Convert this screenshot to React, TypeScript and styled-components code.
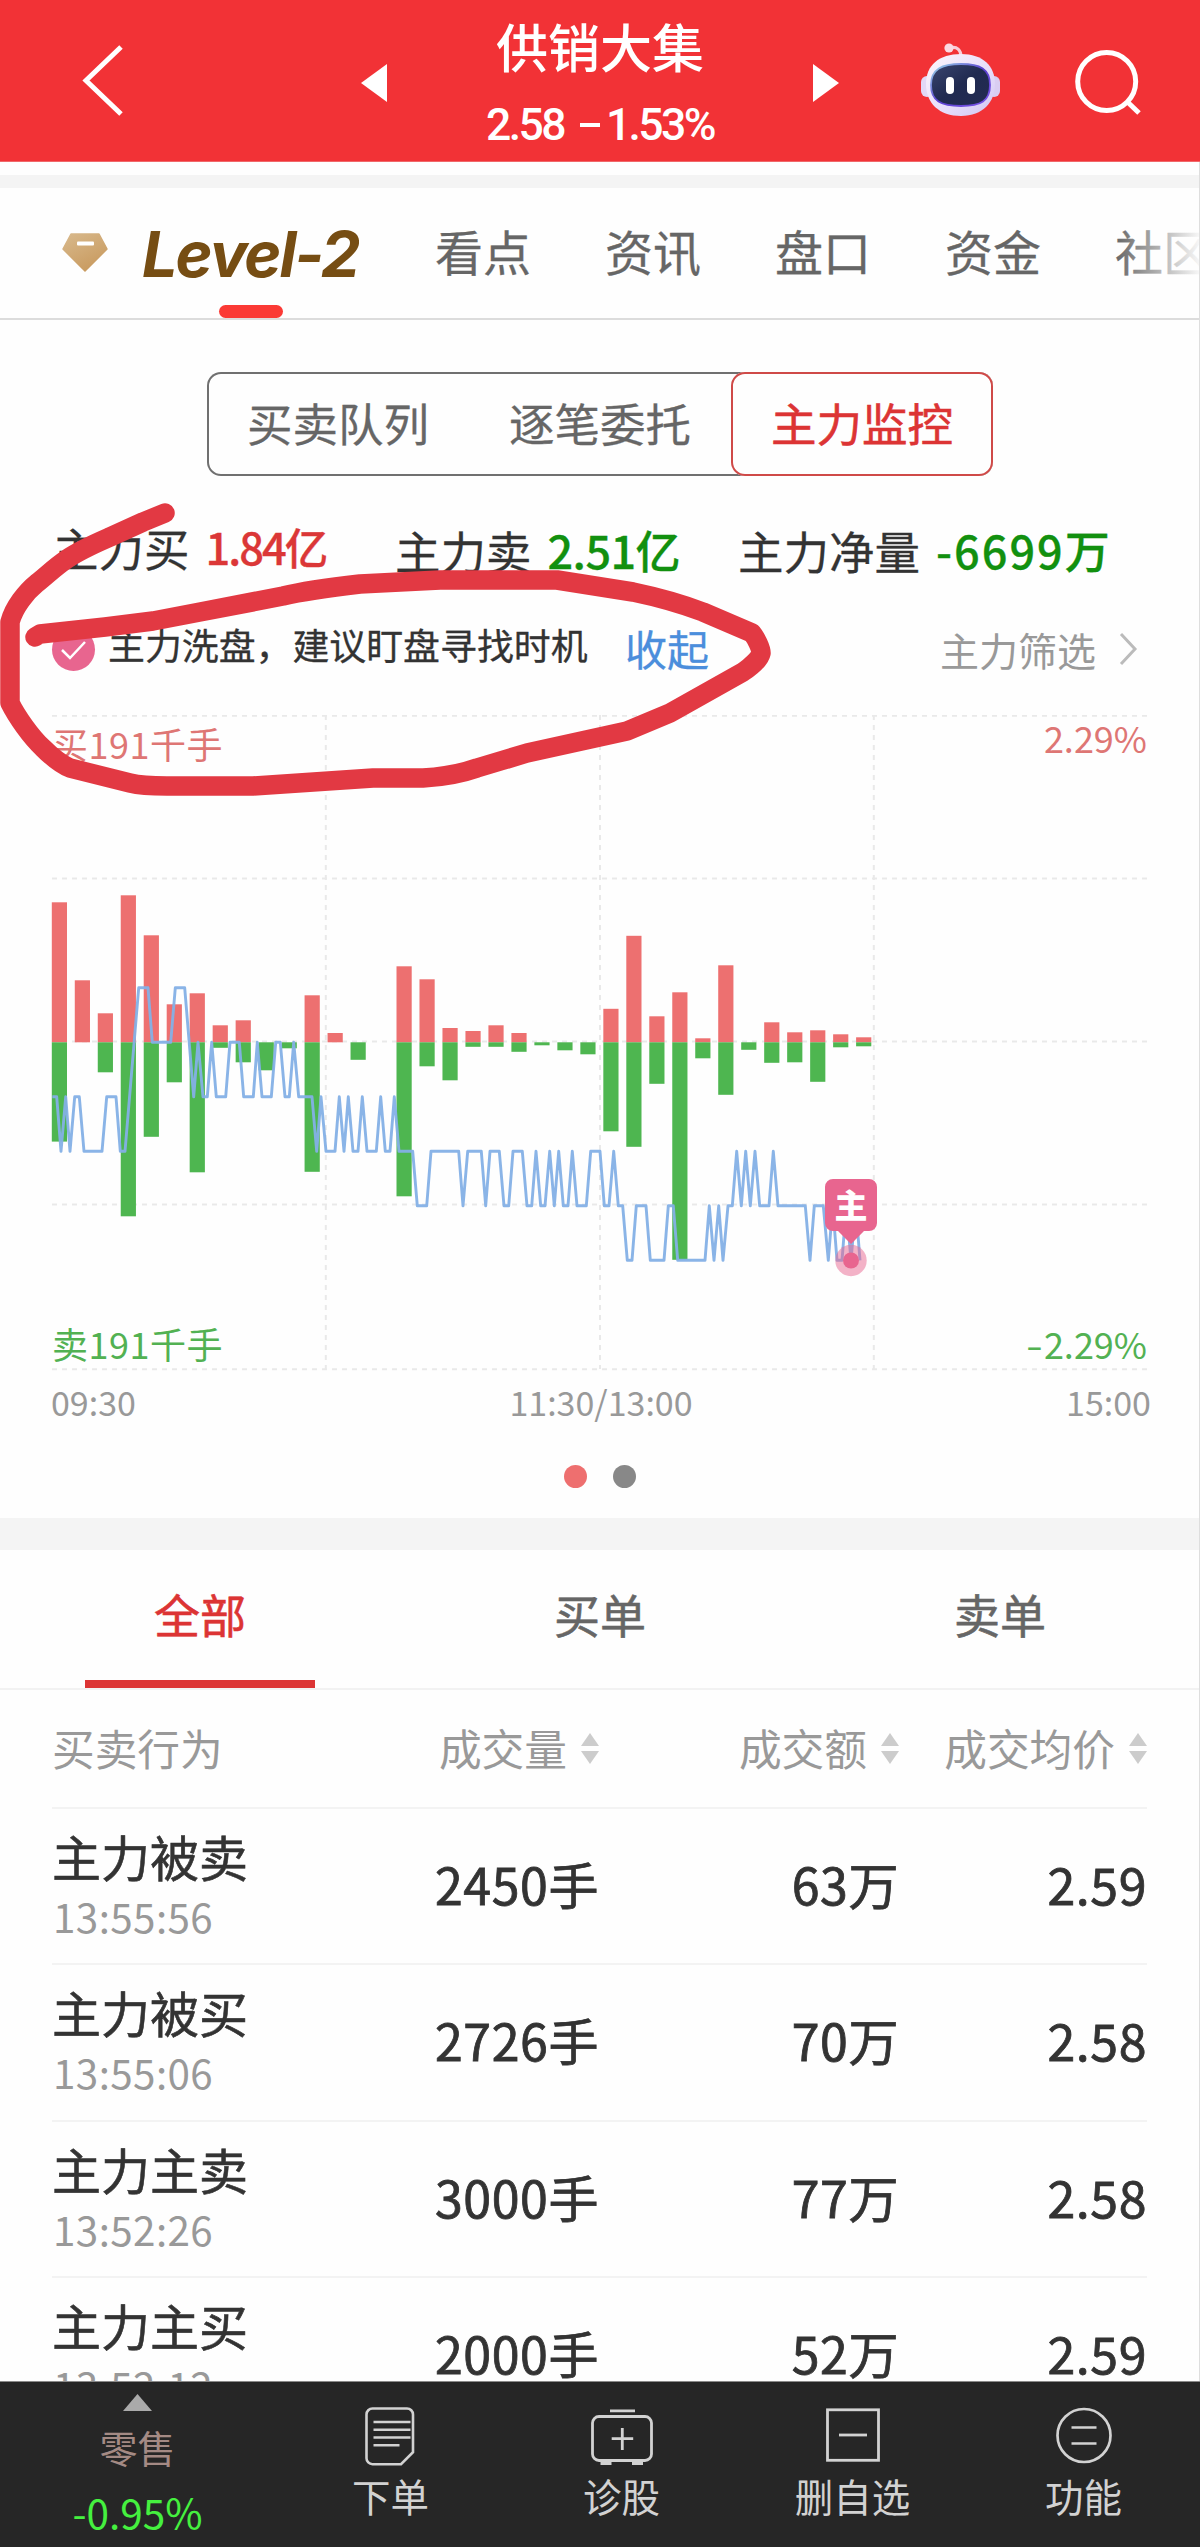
import React from 'react';
import styled, { createGlobalStyle } from 'styled-components';

const GlobalStyle = createGlobalStyle`
  *, *::before, *::after { box-sizing: border-box; }
  body {
    margin: 0;
    background: #fefefe;
    font-family: 'Noto Sans CJK SC', 'Noto Sans', sans-serif;
  }
  svg { display: block; flex: none; }
`;

const Page = styled.div`
  position: relative;
  width: 1200px;
  height: 2547px;
  overflow: hidden;
  display: flex;
  flex-direction: column;
  white-space: nowrap;
`;

/* ---------- top bar ---------- */

const TopBar = styled.header`
  flex: none;
  height: 162px;
  display: grid;
  grid-template-columns: 361px 478px 361px;
  background: #f23236;
  border-bottom: 1px solid #f0686a;
  color: #fff;
`;

const TopSide = styled.div`
  display: flex;
  align-items: flex-start;
`;

const BackSlot = styled(TopSide)`
  padding: 42px 0 0 80px;
`;

const ActionSlot = styled(TopSide)`
  padding: 40px 0 0 81px;
  gap: 68px;
`;

const StockSwitch = styled.div`
  display: flex;
  justify-content: space-between;
`;

const Arrow = styled.span<{ $to: 'left' | 'right' }>`
  width: 26px;
  height: 38px;
  margin-top: 64px;
  background: #fff;
  clip-path: ${p => (p.$to === 'left' ? 'polygon(0 50%, 100% 0, 100% 100%)' : 'polygon(100% 50%, 0 0, 0 100%)')};
`;

const StockTitle = styled.div`
  display: flex;
  flex-direction: column;
  align-items: center;
  padding-top: 16px;
`;

const StockName = styled.div`
  font-size: 52px;
  line-height: 60px;
  font-weight: 500;
`;

const StockQuote = styled.div`
  font-family: Roboto, 'Noto Sans CJK SC', sans-serif;
  font-size: 44.5px;
  line-height: 52px;
  margin-top: 23px;
  font-weight: 500;
  letter-spacing: -2.6px;
  display: flex;
  gap: 16px;
`;

const Change = styled.span`
  display: flex;
  gap: 6px;
`;

const Dash = styled.i`
  width: 20px;
  height: 4px;
  margin-top: 24px;
  background: #fff;
`;

/* ---------- content ---------- */

const Content = styled.main`
  flex: none;
  height: 2219px;
  overflow: hidden;
  border-right: 1px solid #dedede;
`;

const Band = styled.div<{ $top: number; $height: number }>`
  margin-top: ${p => p.$top}px;
  height: ${p => p.$height}px;
  background: #f4f4f4;
`;

const MainTabs = styled.nav`
  position: relative;
  height: 132px;
  border-bottom: 2px solid #dcdcdc;
  display: flex;
  padding: 28px 0 0 60px;
  overflow: hidden;
`;

const Level2Tab = styled.div`
  position: relative;
  flex: none;
  width: 375px;
  height: 102px;
  display: flex;
`;

const Level2Name = styled.span`
  font-family: Inter, sans-serif;
  font-style: italic;
  font-weight: 650;
  font-size: 63px;
  line-height: 76px;
  letter-spacing: -2px;
  color: #764d13;
  margin-left: 30px;
`;

const TabPill = styled.i`
  position: absolute;
  left: 159px;
  bottom: 0;
  width: 64px;
  height: 13px;
  border-radius: 7px;
  background: #fb3a35;
`;

const MainTab = styled.span`
  width: 170px;
  flex: none;
  font-size: 48px;
  line-height: 70px;
  margin-top: -1px;
  color: #666;
  -webkit-text-stroke: 0.3px currentColor;
`;

const TabsFade = styled.i`
  position: absolute;
  right: 0;
  top: 0;
  width: 84px;
  height: 120px;
  background: linear-gradient(to right, rgba(254, 254, 254, 0), rgba(254, 254, 254, 0.95));
`;

const Segments = styled.div`
  width: 786px;
  height: 104px;
  margin: 52px 0 0 207px;
  display: flex;
  border-radius: 14px;
  box-shadow: inset 0 0 0 2px #707070;
`;

const Segment = styled.div<{ $active?: boolean }>`
  width: 262px;
  text-align: center;
  font-size: 45.5px;
  line-height: 100px;
  border-radius: 14px;
  color: ${p => (p.$active ? '#dc3434' : '#666')};
  -webkit-text-stroke: ${p => (p.$active ? 0.6 : 0.3)}px currentColor;
  background: ${p => (p.$active ? '#fefefe' : 'transparent')};
  box-shadow: ${p => (p.$active ? 'inset 0 0 0 2px #cf4a48' : 'none')};
`;

const Totals = styled.div`
  display: grid;
  grid-template-columns: 342px 343px 1fr;
  padding: 41px 0 0 53px;
  height: 127px;
`;

const Total = styled.div<{ $raised?: boolean }>`
  display: flex;
  gap: 16px;
  margin-top: ${p => (p.$raised ? 0 : 3)}px;
  font-size: 45.5px;
  line-height: 60px;
  color: #333;
  -webkit-text-stroke: 0.3px currentColor;
`;

const TotalValue = styled.b<{ $up?: boolean; $tight: number }>`
  font-weight: 500;
  font-size: ${p => (p.$up ? 43.5 : 45)}px;
  letter-spacing: ${p => p.$tight}px;
  color: ${p => (p.$up ? '#db3737' : '#12900f')};
`;

const Advice = styled.div`
  display: flex;
  height: 112px;
  padding-left: 52px;
  align-items: flex-start;
`;

const CheckMark = styled.span`
  width: 43px;
  height: 43px;
  margin-top: 25px;
  border-radius: 50%;
  background: #e8658f;
  display: grid;
  place-items: center;
`;

const AdviceText = styled.span`
  margin: 11px 0 0 13px;
  width: 517px;
  font-size: 36.9px;
  line-height: 60px;
  color: #333;
  -webkit-text-stroke: 0.3px currentColor;
`;

const Collapse = styled.span`
  margin-top: 15px;
  width: 315px;
  font-size: 42px;
  line-height: 60px;
  color: #4b8edc;
  -webkit-text-stroke: 0.3px currentColor;
`;

const FilterLink = styled.span`
  margin-top: 16px;
  font-size: 39px;
  line-height: 60px;
  color: #999;
  display: flex;
  align-items: center;
  gap: 20px;
`;

/* ---------- chart ---------- */

const ChartBox = styled.section`
  position: relative;
  height: 803px;
`;

const ChartLabel = styled.span<{ $y: number; $side: 'left' | 'right'; $up?: boolean }>`
  position: absolute;
  top: ${p => p.$y}px;
  ${p => (p.$side === 'left' ? 'left: 52px; letter-spacing: 0.5px;' : 'right: 52px;')}
  font-size: 36px;
  line-height: 50px;
  color: ${p => (p.$up ? '#de7674' : '#52b152')};
`;

const Minus = styled.span`
  display: inline-block;
  transform: scaleX(1.35);
  transform-origin: left;
  letter-spacing: 5px;
`;

const Axis = styled.div`
  display: grid;
  grid-template-columns: 1fr 1fr 1fr;
  padding: 2px 48px 0 51px;
  font-size: 34px;
  line-height: 50px;
  color: #999;
  > :nth-child(2) { text-align: center; }
  > :nth-child(3) { text-align: right; }
`;

const Dots = styled.div`
  display: flex;
  justify-content: center;
  gap: 26px;
  padding-top: 38px;
`;

const Dot = styled.i<{ $color: string }>`
  width: 23px;
  height: 23px;
  border-radius: 50%;
  background: ${p => p.$color};
`;

/* ---------- deals ---------- */

const DealTabs = styled.nav`
  height: 140px;
  display: grid;
  grid-template-columns: 400px 400px 400px;
  border-bottom: 2px solid #f2f2f2;
`;

const DealTab = styled.div<{ $active?: boolean }>`
  display: flex;
  flex-direction: column;
  justify-content: space-between;
  align-items: center;
  padding-top: 28px;
  font-size: 46px;
  line-height: 70px;
  -webkit-text-stroke: 0.6px currentColor;
  color: ${p => (p.$active ? '#dc3434' : '#666')};
  &::after {
    content: '';
    width: 230px;
    height: 8px;
    background: ${p => (p.$active ? '#dc3434' : 'transparent')};
  }
`;

const rowColumns = `
  display: grid;
  grid-template-columns: 300px 247px 300px 248px;
  margin: 0 52px;
  border-bottom: 2px solid #f3f3f3;
`;

const DealHead = styled.div`
  ${rowColumns}
  height: 119px;
  padding-top: 22px;
  font-size: 42.7px;
  line-height: 70px;
  color: #999;
`;

const HeadCell = styled.div<{ $left?: boolean }>`
  display: flex;
  gap: 14px;
  justify-content: ${p => (p.$left ? 'flex-start' : 'flex-end')};
`;

const Sorter = styled.span`
  width: 18px;
  margin-top: 21px;
  display: flex;
  flex-direction: column;
  gap: 5px;
  &::before, &::after {
    content: '';
    height: 13px;
    background: #ccc;
    clip-path: polygon(50% 0, 100% 100%, 0 100%);
  }
  &::after { clip-path: polygon(0 0, 100% 0, 50% 100%); }
`;

const DealRow = styled.div`
  ${rowColumns}
  height: 156.4px;
  color: #333;
`;

const DealName = styled.div`
  padding-top: 16px;
  font-size: 49px;
  line-height: 62px;
  -webkit-text-stroke: 0.6px currentColor;
`;

const DealTime = styled.div`
  font-size: 40.4px;
  line-height: 50px;
  margin: 4px 0 0 1px;
  letter-spacing: 0.4px;
  -webkit-text-stroke: 0;
  color: #999;
`;

const DealValue = styled.div`
  text-align: right;
  font-size: 50px;
  line-height: 70px;
  padding-top: 39px;
  letter-spacing: 0.6px;
  -webkit-text-stroke: 0.8px currentColor;
`;

/* ---------- bottom bar ---------- */

const BottomBar = styled.footer`
  flex: none;
  height: 166px;
  display: grid;
  grid-template-columns: 275px 231px 231px 231px 231px;
  background: #262626;
  border-top: 1px solid #8a8a8a;
`;

const BottomItem = styled.div`
  display: flex;
  flex-direction: column;
  align-items: center;
  padding-top: 22px;
  font-size: 38.5px;
  line-height: 50px;
  color: #d2d2d2;
  > svg { margin-bottom: 4px; }
`;

const SectorItem = styled.div`
  display: flex;
  flex-direction: column;
  align-items: center;
  padding-top: 12px;
  font-size: 38px;
  line-height: 50px;
  color: #a48a84;
`;

const Caret = styled.i`
  width: 29px;
  height: 17px;
  background: #aaa;
  clip-path: polygon(50% 0, 100% 100%, 0 100%);
  margin-bottom: 11px;
`;

const SectorChange = styled.span`
  margin-top: 15px;
  font-size: 40.5px;
  color: #45f03f;
`;

const Annotation = styled.svg`
  position: absolute;
  left: 0;
  top: 480px;
  pointer-events: none;
`;

/* ---------- data ---------- */

const bars: [number, number][] = [
  [140, 99.3], [62, 0], [29, 30], [147, 174], [107, 94.5], [38, 40], [49, 130], [17, 5.5], [22, 20],
  [0, 28], [0, 6], [47, 129.5], [9.3, 0], [0, 17.5], [0, 0], [76, 154], [63, 24], [14.3, 38],
  [11.3, 4.5], [17, 4.5], [9.3, 9.5], [0, 3], [0, 8], [0, 12], [33.5, 89], [106.5, 104.5], [26, 41.5],
  [50, 217.5], [4, 16], [77, 52.5], [0, 7.5], [20, 20.5], [10, 20], [12, 39.5], [8, 5], [5, 4],
];

/* price steps: [x in thirds of a pixel, tick level] */
const steps: [number, number][] = [
  [157, -1], [170, -1], [183, -2], [197, -1], [210, -2], [224, -1], [238, -1], [252, -2], [306, -2],
  [320, -1], [348, -1], [361, -2], [375, -2], [416, 1], [444, 1], [457, 0], [512, 0], [526, 1], [554, 1],
  [581, -1], [594, 0], [609, -1], [622, -1], [635, 0], [649, -1], [677, -1], [690, 0], [718, 0], [731, -1],
  [760, -1], [772, 0], [786, -1], [814, -1], [827, 0], [841, 0], [855, -1], [868, -1], [881, 0], [896, -1],
  [936, -1], [950, -2], [963, -1], [978, -2], [1005, -2], [1018, -1], [1032, -2], [1045, -1], [1059, -2],
  [1074, -2], [1087, -1], [1101, -2], [1129, -2], [1142, -1], [1156, -2], [1170, -2], [1183, -1],
  [1197, -2], [1238, -2], [1252, -3], [1280, -3], [1293, -2], [1376, -2], [1389, -3], [1403, -2],
  [1444, -2], [1457, -3], [1470, -2], [1498, -2], [1512, -3], [1526, -3], [1539, -2], [1567, -2],
  [1581, -3], [1595, -3], [1608, -2], [1622, -3], [1635, -3], [1649, -2], [1663, -3], [1676, -2],
  [1690, -3], [1704, -3], [1717, -2], [1731, -3], [1759, -3], [1772, -2], [1800, -2], [1813, -3],
  [1827, -3], [1841, -2], [1855, -3], [1868, -3], [1882, -4], [1896, -4], [1909, -3], [1938, -3],
  [1951, -4], [1992, -4], [2005, -3], [2020, -3], [2033, -4], [2115, -4], [2128, -3], [2142, -4],
  [2156, -3], [2169, -4], [2184, -3], [2197, -3], [2210, -2], [2224, -3], [2237, -2], [2251, -3],
  [2265, -2], [2279, -3], [2307, -3], [2320, -2], [2334, -3], [2416, -3], [2430, -4], [2443, -3],
  [2470, -3], [2485, -4], [2498, -3], [2511, -4], [2526, -4], [2539, -3], [2553, -4], [2567, -3],
  [2580, -4],
];

const deals = [
  { name: '主力被卖', time: '13:55:56', volume: '2450手', amount: '63万', price: '2.59' },
  { name: '主力被买', time: '13:55:06', volume: '2726手', amount: '70万', price: '2.58' },
  { name: '主力主卖', time: '13:52:26', volume: '3000手', amount: '77万', price: '2.58' },
  { name: '主力主买', time: '13:52:12', volume: '2000手', amount: '52万', price: '2.59' },
];

/* ---------- drawings ---------- */

const BASE = 327.3;

function Chart() {
  const points = steps.map(([x, level]) => `${(x / 3).toFixed(1)},${(BASE - level * 54.5).toFixed(1)}`).join(' ');
  return (
    <svg width="1199" height="660" viewBox="0 0 1199 660">
      <g stroke="#e9e9e9" strokeWidth="2" strokeDasharray="5 5">
        {[0.8, 163.6, 326.6, 489.4, 654.3].map(y => (
          <line key={y} x1="52" x2="1148" y1={y} y2={y} />
        ))}
        {[325.8, 600, 873.8].map(x => (
          <line key={x} x1={x} x2={x} y1="0" y2="654" />
        ))}
      </g>
      {bars.map(([up, down], i) => (
        <g key={i}>
          <rect x={51.8 + i * 22.98} y={BASE - up} width="15.2" height={up} fill="#ed7070" />
          <rect x={51.8 + i * 22.98} y={BASE} width="15.2" height={down} fill="#4eb650" />
        </g>
      ))}
      <polyline points={points} fill="none" stroke="#84b0e6" strokeWidth="2.9" strokeLinejoin="round" opacity="0.95" />
      <circle cx="851" cy="545.5" r="15.7" fill="#e8658f" opacity="0.5" />
      <circle cx="851" cy="545.5" r="8" fill="#e8658f" />
      <path
        d="M833 464h36a8 8 0 0 1 8 8v36a8 8 0 0 1-8 8h-5l-13 13-13-13h-5a8 8 0 0 1-8-8v-36a8 8 0 0 1 8-8z"
        fill="#e8658f"
      />
      <text x="851" y="502.500" fontSize="33" fontWeight="900" fill="#fff" textAnchor="middle">主</text>
    </svg>
  );
}

const BackIcon = () => (
  <svg width="46" height="78" viewBox="80 42 46 78" fill="none" stroke="#fff" strokeWidth="5">
    <path d="M121 47 86 80.500l35 33.500" />
  </svg>
);

const RobotIcon = () => (
  <svg width="84" height="80" viewBox="0 0 84 80">
    <defs>
      <linearGradient id="shell" x1="0" y1="0" x2="1" y2="1">
        <stop offset="0" stopColor="#fdf6fb" />
        <stop offset="0.6" stopColor="#e6dcfa" />
        <stop offset="1" stopColor="#cfc6f2" />
      </linearGradient>
      <linearGradient id="rim" x1="0" y1="0" x2="1" y2="1">
        <stop offset="0" stopColor="#9adbe8" />
        <stop offset="0.5" stopColor="#5b3fd0" />
        <stop offset="1" stopColor="#7a55e8" />
      </linearGradient>
      <linearGradient id="visor" x1="0" y1="0" x2="1" y2="1">
        <stop offset="0" stopColor="#3a4570" />
        <stop offset="0.5" stopColor="#202a50" />
        <stop offset="1" stopColor="#232b52" />
      </linearGradient>
    </defs>
    <path d="M30 8c7-2 11 2 11 9" fill="none" stroke="#f9cdd8" strokeWidth="3.200" />
    <circle cx="29" cy="8" r="4.600" fill="#fbd9e2" />
    <rect x="1" y="36" width="12" height="21" rx="6" fill="#e2d8f6" />
    <rect x="68" y="36" width="12" height="21" rx="6" fill="#d9cdf2" />
    <path d="M41 14c22 0 34 12 34 30S63 76 41 76 6 63 6 44s13-30 35-30z" fill="url(#shell)" />
    <path d="M41 24c19 0 29 5 29 21S61 66 41 66 11 61 11 45s11-21 30-21z" fill="url(#visor)" stroke="url(#rim)" strokeWidth="1.800" />
    <rect x="26" y="37" width="8" height="17" rx="4" fill="#fff" />
    <rect x="47" y="37" width="8" height="17" rx="4" fill="#fff" />
  </svg>
);

const SearchIcon = () => (
  <svg width="72" height="80" viewBox="1072 42 72 80" fill="none" stroke="#fff" strokeWidth="5">
    <circle cx="1106.700" cy="83.500" r="29" />
    <path d="m1127 103.500 12 11.500" />
  </svg>
);

const DiamondIcon = () => (
  <svg width="52" height="76" viewBox="60 216 52 76">
    <defs>
      <linearGradient id="gold" x1="0" y1="0" x2="0.6" y2="1">
        <stop offset="0" stopColor="#d8b98c" />
        <stop offset="1" stopColor="#c99b60" />
      </linearGradient>
    </defs>
    <path d="M71 234h28l8 15-22 22-22-22z" fill="url(#gold)" stroke="url(#gold)" strokeWidth="1.500" strokeLinejoin="round" />
    <rect x="77" y="241.500" width="17" height="4" rx="1" fill="#fff" />
  </svg>
);

const OrderIcon = () => (
  <svg width="60" height="62" viewBox="0 0 60 62" fill="none" stroke="#d2d2d2" strokeWidth="2.600">
    <path d="M11.500 4.500h34.500a6 6 0 0 1 6 6V48.200L40 60.200H11.500a6 6 0 0 1-6-6V10.500a6 6 0 0 1 6-6z" />
    <path d="M12.500 18h37M12.500 25.800h37M12.500 33.500h37M12.500 41.200h26" />
  </svg>
);

const DiagnoseIcon = () => (
  <svg width="66" height="62" viewBox="0 0 66 62" fill="none" stroke="#d2d2d2" strokeWidth="2.800">
    <rect x="3.500" y="12.500" width="59" height="44" rx="6.500" />
    <path d="M21 6.800h25M33.300 24v22M22.700 34.700h21.500" />
    <path d="M11.500 59.200h11M43 59.200h11" strokeWidth="3.600" />
  </svg>
);

const RemoveIcon = () => (
  <svg width="60" height="62" viewBox="0 0 60 62" fill="none" stroke="#d2d2d2" strokeWidth="2.800">
    <rect x="4.500" y="5.800" width="51" height="50.500" />
    <path d="M16 31h28" />
  </svg>
);

const FeatureIcon = () => (
  <svg width="60" height="62" viewBox="0 0 60 62" fill="none" stroke="#d2d2d2" strokeWidth="2.700">
    <circle cx="30" cy="31.500" r="26.500" />
    <path d="M17.500 23.500h25M17.500 39.500h25" />
  </svg>
);

const bottomItems = [
  { label: '下单', icon: <OrderIcon /> },
  { label: '诊股', icon: <DiagnoseIcon /> },
  { label: '删自选', icon: <RemoveIcon /> },
  { label: '功能', icon: <FeatureIcon /> },
];

export default function App() {
  return (
    <Page>
      <GlobalStyle />
      <TopBar>
        <BackSlot><BackIcon /></BackSlot>
        <StockSwitch>
          <Arrow $to="left" />
          <StockTitle>
            <StockName>供销大集</StockName>
            <StockQuote>
              <span>2.58</span>
              <Change><Dash /><span>1.53%</span></Change>
            </StockQuote>
          </StockTitle>
          <Arrow $to="right" />
        </StockSwitch>
        <ActionSlot>
          <RobotIcon />
          <SearchIcon />
        </ActionSlot>
      </TopBar>

      <Content>
        <Band $top={13} $height={13} />
        <MainTabs>
          <Level2Tab>
            <DiamondIcon />
            <Level2Name>Level-2</Level2Name>
            <TabPill />
          </Level2Tab>
          {['看点', '资讯', '盘口', '资金', '社区'].map(t => <MainTab key={t}>{t}</MainTab>)}
          <TabsFade />
        </MainTabs>

        <Segments>
          <Segment>买卖队列</Segment>
          <Segment>逐笔委托</Segment>
          <Segment $active>主力监控</Segment>
        </Segments>

        <Totals>
          <Total $raised>主力买<TotalValue $up $tight={-2}>1.84亿</TotalValue></Total>
          <Total>主力卖<TotalValue $tight={-0.6}>2.51亿</TotalValue></Total>
          <Total>主力净量<TotalValue $tight={2}>-6699万</TotalValue></Total>
        </Totals>

        <Advice>
          <CheckMark>
            <svg width="28" height="22" viewBox="0 0 28 22" fill="none" stroke="#fff" strokeWidth="2.500">
              <path d="m2 11 8 8L25 3" />
            </svg>
          </CheckMark>
          <AdviceText>主力洗盘，建议盯盘寻找时机</AdviceText>
          <Collapse>收起</Collapse>
          <FilterLink>
            主力筛选
            <svg width="24" height="36" viewBox="0 0 24 36" fill="none" stroke="#bbb" strokeWidth="3">
              <path d="m5 3 14 15L5 33" />
            </svg>
          </FilterLink>
        </Advice>

        <ChartBox>
          <Chart />
          <ChartLabel $y={3} $side="left" $up>买191千手</ChartLabel>
          <ChartLabel $y={-3} $side="right" $up>2.29%</ChartLabel>
          <ChartLabel $y={603} $side="left">卖191千手</ChartLabel>
          <ChartLabel $y={603} $side="right"><Minus>-</Minus>2.29%</ChartLabel>
          <Axis>
            <span>09:30</span>
            <span>11:30/13:00</span>
            <span>15:00</span>
          </Axis>
          <Dots>
            <Dot $color="#ee6f6f" />
            <Dot $color="#888" />
          </Dots>
        </ChartBox>

        <Band $top={0} $height={32} />

        <DealTabs>
          <DealTab $active>全部</DealTab>
          <DealTab>买单</DealTab>
          <DealTab>卖单</DealTab>
        </DealTabs>

        <DealHead>
          <HeadCell $left>买卖行为</HeadCell>
          <HeadCell>成交量<Sorter /></HeadCell>
          <HeadCell>成交额<Sorter /></HeadCell>
          <HeadCell>成交均价<Sorter /></HeadCell>
        </DealHead>
        {deals.map(d => (
          <DealRow key={d.time}>
            <DealName>
              {d.name}
              <DealTime>{d.time}</DealTime>
            </DealName>
            <DealValue>{d.volume}</DealValue>
            <DealValue>{d.amount}</DealValue>
            <DealValue>{d.price}</DealValue>
          </DealRow>
        ))}
      </Content>

      <BottomBar>
        <SectorItem>
          <Caret />
          零售
          <SectorChange>-0.95%</SectorChange>
        </SectorItem>
        {bottomItems.map(b => (
          <BottomItem key={b.label}>
            {b.icon}
            {b.label}
          </BottomItem>
        ))}
      </BottomBar>

      <Annotation width="800" height="330" viewBox="0 480 800 330" fill="none">
        <path
          d="M165 513 143 522 110 537C94 544 80 550 67 559 55 567 46 576 37 583 26 592 14 607 10 622V703C17 717 31 737 43 748 52 757 60 764 70 768L130 783C142 786 155 786 167 786H253L373 778H423C441 777 460 774 477 768 494 763 510 758 527 753L627 731 670 713 743 672C752 666 760 658 761 653 761 648 756 638 752 633L703 612C682 604 657 597 633 592L557 580H440L360 584C334 587 308 590 283 596L200 612 153 621 105 627 40 634 35 637"
          stroke="#e23943"
          strokeWidth="19.500"
          strokeLinecap="round"
          strokeLinejoin="round"
        />
      </Annotation>
    </Page>
  );
}
